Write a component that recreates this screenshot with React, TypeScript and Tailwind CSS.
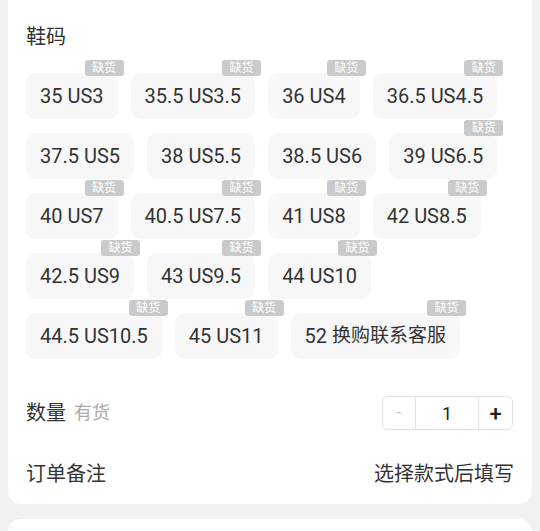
import React from "react";

const sizes: { num: string; us: string; out: boolean }[] = [
  { num: "35", us: "US3", out: true },
  { num: "35.5", us: "US3.5", out: true },
  { num: "36", us: "US4", out: true },
  { num: "36.5", us: "US4.5", out: true },
  { num: "37.5", us: "US5", out: false },
  { num: "38", us: "US5.5", out: false },
  { num: "38.5", us: "US6", out: false },
  { num: "39", us: "US6.5", out: true },
  { num: "40", us: "US7", out: true },
  { num: "40.5", us: "US7.5", out: true },
  { num: "41", us: "US8", out: true },
  { num: "42", us: "US8.5", out: true },
  { num: "42.5", us: "US9", out: true },
  { num: "43", us: "US9.5", out: true },
  { num: "44", us: "US10", out: true },
  { num: "44.5", us: "US10.5", out: true },
  { num: "45", us: "US11", out: true },
  { num: "52", us: "换购联系客服", out: true },
];

export default function App() {
  return (
    <div
      className="w-[540px] h-[531px] overflow-hidden bg-[#f1f1f1] px-[8px] text-[#333333]"
      style={{ fontFamily: 'Roboto, "Noto Sans CJK SC", sans-serif' }}
    >
      <div className="bg-white rounded-b-[13px] px-[18px] pt-[23px] pb-[16px]">
        <div className="text-[20px] leading-[28px]">鞋码</div>
        <div className="mt-[22px] flex flex-wrap gap-x-[13px] gap-y-[14px] pr-[8px]">
          {sizes.map((s) => {
            const cjk = /[\u4e00-\u9fff]/.test(s.us);
            return (
              <div
                key={s.num}
                className="relative h-[46px] px-[14px] flex items-center rounded-[10px] bg-[#f7f7f7] text-[20px] leading-[24px] text-[#333333] whitespace-pre"
              >
                {s.num + " "}
                {cjk ? <span className="text-[19px]">{s.us}</span> : s.us}
                {s.out && (
                  <span className="absolute top-[-13px] right-[-6px] h-[16px] px-[7.5px] bg-[#cacaca] text-white text-[12px] leading-[16px] rounded-[3px]">
                    缺货
                  </span>
                )}
              </div>
            );
          })}
        </div>
        <div className="mt-[37px] h-[34px] flex items-center justify-between">
          <div className="flex items-center gap-[8px]">
            <span className="text-[20px] leading-[28px] text-[#333333]">数量</span>
            <span className="text-[18px] leading-[28px] text-[#aaaaaa]">有货</span>
          </div>
          <div className="flex h-[34px] border border-[#e2e2e2] rounded-[6px] mr-[1px]">
            <div className="w-[33px] flex items-center justify-center text-[#c0c0c0] text-[16px] border-r border-[#e2e2e2]">
              -
            </div>
            <div className="w-[63px] flex items-center justify-center text-[18px] text-[#222222] border-r border-[#e2e2e2]">
              1
            </div>
            <div className="w-[33px] flex items-center justify-center text-[22px] font-medium text-[#222222]">
              +
            </div>
          </div>
        </div>
        <div className="mt-[30px] flex items-center justify-between text-[20px] leading-[28px] text-[#333333]">
          <span>订单备注</span>
          <span>选择款式后填写</span>
        </div>
      </div>
      <div className="mt-[15px] h-[40px] bg-white rounded-t-[13px]" />
    </div>
  );
}
